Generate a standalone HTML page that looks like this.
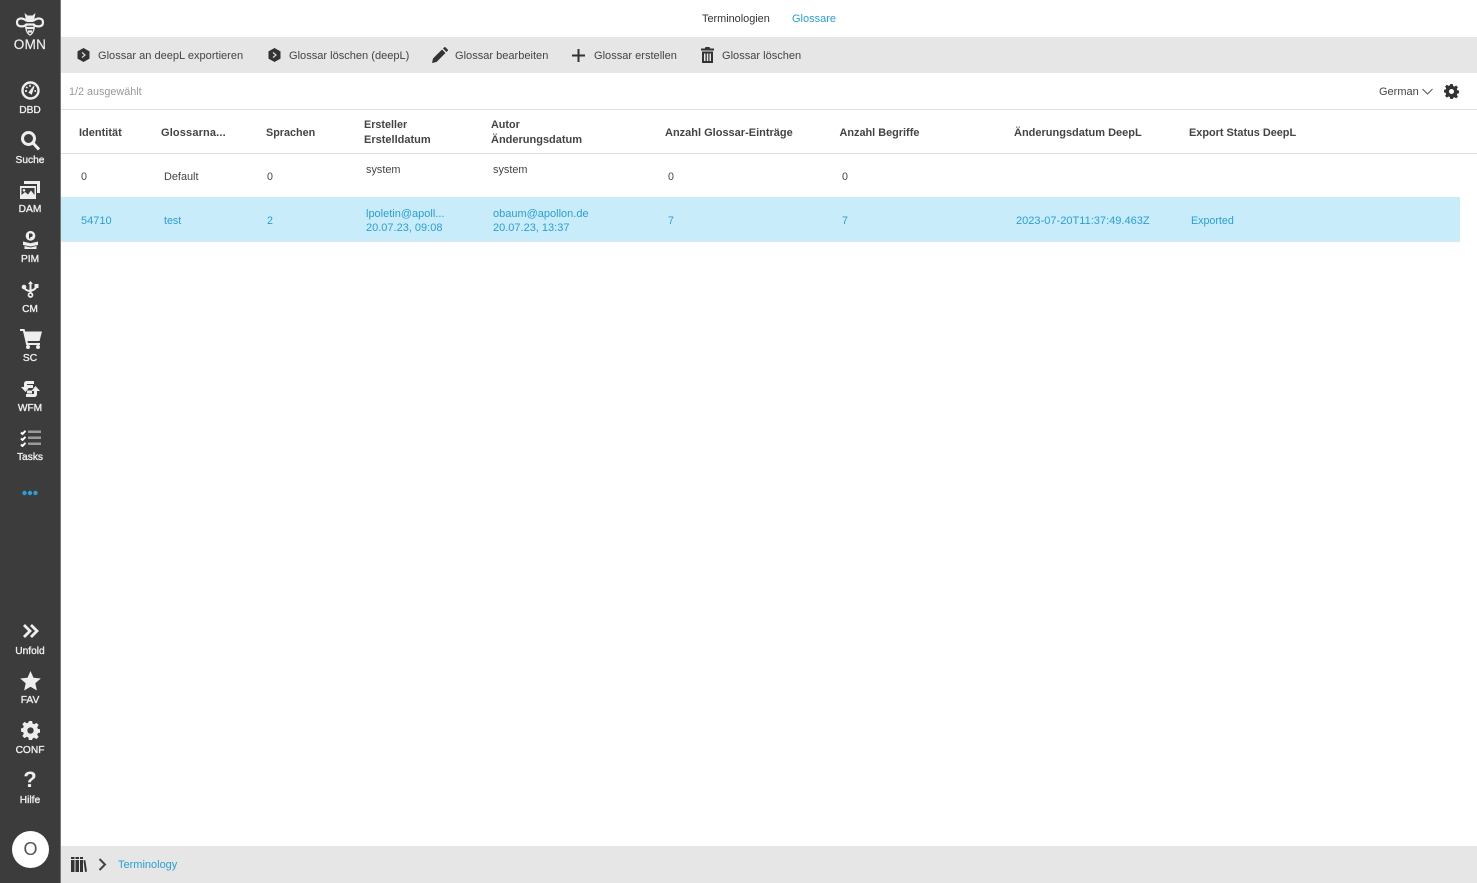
<!DOCTYPE html>
<html lang="de"><head><meta charset="utf-8"><title>Glossare</title>
<style>
html,body{margin:0;padding:0;width:1477px;height:883px;overflow:hidden;background:#fff;font-family:"Liberation Sans",sans-serif;font-size:12px;color:#444}
.a{position:absolute;white-space:nowrap;line-height:14px}
.b{font-weight:bold;color:#444}
.l{color:#2a9fd6}
.n{position:absolute;left:0;width:60px;text-align:center;color:#eee;font-size:10.2px;line-height:12px;-webkit-text-stroke:.35px #eee}
svg{position:absolute;display:block}
</style></head><body>
<div style="position:absolute;left:0;top:0;width:60px;height:883px;background:#3c3c3c"></div>
<div style="position:absolute;left:60px;top:0;width:1px;height:883px;background:#777"></div>
<div style="position:absolute;left:61px;top:37px;width:1416px;height:36px;background:#e6e6e6"></div>
<div style="position:absolute;left:61px;top:109px;width:1416px;height:1px;background:#e0e0e0"></div>
<div style="position:absolute;left:61px;top:153px;width:1416px;height:1px;background:#e0e0e0"></div>
<div style="position:absolute;left:61px;top:197px;width:1399px;height:45px;background:#c9ecfa;border-bottom:1px solid #dde8ee;box-sizing:border-box"></div>
<div style="position:absolute;left:61px;top:846px;width:1416px;height:37px;background:#e6e6e6"></div>

<!-- Sidebar -->
<svg style="left:14px;top:12px" width="32" height="26" viewBox="0 0 32 26" fill="none" stroke="#eee" stroke-width="2.200"><path d="M13 9C8 5 3 6 3 10.500s6 5 10 2M19 9c5-4 10-3 10 1.500s-6 5-10 2"/><path fill="#eee" stroke="none" d="M10.500 1l3 2.500h5L21.500 1l-1 5-1.500 4h-6l-1.500-4z"/><path d="M11.500 12.500h9M12 16h8M14 19.500h4" stroke-width="2.300"/><path d="M11.500 12c0 6 2 10 4.500 11 2.500-1 4.500-5 4.500-11" stroke-width="1.300"/></svg>
<div class="a" style="left:0;width:60px;text-align:center;top:38px;font-size:13.500px;color:#eee;letter-spacing:.3px;-webkit-text-stroke:.2px #eee">OMN</div>
<svg style="left:21px;top:81px" width="19" height="19" viewBox="0 0 19 19" fill="none" stroke="#eee"><circle cx="9.500" cy="9.500" r="8" stroke-width="2.400"/><path d="M8 11.500L13 5l-2.500 8z" fill="#eee"/><path d="M4 10h2M5.200 5.800l1.200 1.200M9 3.800v2M13.500 10h1.500" stroke-width="1.700"/></svg>
<div class="n" style="top:105px">DBD</div>
<svg style="left:20px;top:130px" width="21" height="21" viewBox="0 0 21 21" fill="none" stroke="#eee" stroke-width="3"><circle cx="8.500" cy="8.500" r="6"/><path d="M13 13l6 6.500"/></svg>
<div class="n" style="top:155px">Suche</div>
<svg style="left:20px;top:181px" width="20" height="18" viewBox="0 0 20 18" fill="#eee"><path d="M4 0h16v12h-3V3H4z"/><path fill-rule="evenodd" d="M0 5h16v13H0zM1.500 7v7l3.500-3 3 2.500 3-4 3.500 4.500V7zM4 8a1.300 1.300 0 1 0 .01 0z"/></svg>
<div class="n" style="top:204px">DAM</div>
<svg style="left:22px;top:231px" width="17" height="18" viewBox="0 0 17 18" fill="#eee"><path fill-rule="evenodd" d="M8.500 0a4.800 4.800 0 1 1-.01 0zM7 2.500v5h1.300V6h1a1.800 1.800 0 0 0 0-3.500z"/><path d="M1 10.500l7.500 1.700 7.500-1.700v3.500l-7.500 1.500L1 14zM2.500 15l6 1.500 6-1.500v3h-12z"/></svg>
<div class="n" style="top:254px">PIM</div>
<svg style="left:21px;top:281px" width="19" height="17" viewBox="0 0 19 17" fill="#eee" stroke="#eee"><path d="M9.500 2v10M3 6.500c1.500 2.500 3.500 3.500 6.500 3.500M15.500 5c-.5 3-3 4-6 5" fill="none" stroke-width="2"/><path d="M9.500 0l2.500 3H7z" stroke="none"/><circle cx="3" cy="6" r="2.300" stroke="none"/><rect x="13.500" y="3" width="4" height="4" stroke="none"/><circle cx="9.500" cy="14" r="2" fill="none" stroke-width="1.700"/></svg>
<div class="n" style="top:304px">CM</div>
<svg style="left:20px;top:329px" width="22" height="20" viewBox="0 0 22 20" fill="#eee"><path d="M0 0h4.500l.7 2.500H22L19.500 12H7.500l.4 2H20v2H6.200L3 2H0z"/><circle cx="8" cy="18" r="2"/><circle cx="18" cy="18" r="2"/></svg>
<div class="n" style="top:353px">SC</div>
<svg style="left:21px;top:381px" width="19" height="16" viewBox="0 0 19 16" fill="#eee"><path d="M3 3C3 1 4 0 6 0h7v3H6v3h2.500L4.500 11 0 6h3zM16 5v8c0 2-1 3-3 3H5v-3h8v-3h-2.500l4-5 4.500 5H16z"/><rect x="6" y="4" width="6" height="3"/><rect x="6" y="9.500" width="5" height="3"/></svg>
<div class="n" style="top:403px">WFM</div>
<svg style="left:20px;top:430px" width="21" height="17" viewBox="0 0 21 17"><path d="M1 2.500L2.500 4 5.500.8M1 8.500L2.500 10l3-3.200M1 14.500L2.500 16l3-3.200" fill="none" stroke="#fff" stroke-width="2"/><path d="M8 .5h13v2.500H8zM8 6.500h13V9H8zM8 12.500h13V15H8z" fill="#9a9a9a"/></svg>
<div class="n" style="top:452px">Tasks</div>
<svg style="left:22px;top:490px" width="16" height="6" viewBox="0 0 16 6" fill="#2a9fd6"><circle cx="2.500" cy="3" r="2.200"/><circle cx="8" cy="3" r="2.200"/><circle cx="13.500" cy="3" r="2.200"/></svg>

<svg style="left:22px;top:623px" width="17" height="16" viewBox="0 0 17 16" fill="none" stroke="#eee" stroke-width="2.800"><path d="M2 2l6 6-6 6M9 2l6 6-6 6"/></svg>
<div class="n" style="top:646px">Unfold</div>
<svg style="left:20px;top:671px" width="21" height="20" viewBox="0 0 21 20" fill="#eee"><path d="M10.500 0l3 6.700 7.300.8-5.500 4.800 1.600 7.200-6.400-3.700-6.400 3.700 1.600-7.200L.2 7.500l7.300-.8z"/></svg>
<div class="n" style="top:695px">FAV</div>
<svg style="left:21px;top:721px" width="19" height="19" viewBox="0 0 24 24" fill="#eee"><path fill-rule="evenodd" d="M10 0h4l.7 3.300 2 .8L19.500 2.300l2.800 2.800-1.800 2.800.8 2 3.300.7v4l-3.300.7-.8 2 1.800 2.800-2.800 2.800-2.800-1.800-2 .8L14 24h-4l-.7-3.300-2-.8-2.800 1.800-2.800-2.800 1.800-2.800-.8-2L0 13.400v-4l2.700-.7.8-2-1.800-2.800 2.800-2.800 2.800 1.800 2-.8zM12 8a4 4 0 1 0 .01 0z"/></svg>
<div class="n" style="top:745px">CONF</div>
<div class="a" style="left:0;width:60px;text-align:center;top:769px;font-size:22px;line-height:22px;color:#eee;font-weight:bold">?</div>
<div class="n" style="top:795px">Hilfe</div>
<div style="position:absolute;left:12px;top:831px;width:37px;height:37px;border-radius:50%;background:#fff;color:#555;font-size:18px;line-height:37px;text-align:center">O</div>

<!-- Top tabs -->
<div class="a" style="left:702px;top:12px;font-size:10.900px;color:#333">Terminologien</div>
<div class="a l" style="left:792px;top:12px;font-size:11px">Glossare</div>

<!-- Toolbar -->
<svg style="left:77px;top:48px" width="13" height="14" viewBox="0 0 13 14"><path d="M6.500 0l6 3.400v7.200l-6 3.400-6-3.400V3.400z" fill="#333"/><path d="M5 4.500L8 7 5 9.500" fill="none" stroke="#ddd" stroke-width="1.200"/></svg>
<div class="a" style="left:98px;top:49px;font-size:11.050px">Glossar an deepL exportieren</div>
<svg style="left:268px;top:48px" width="13" height="14" viewBox="0 0 13 14"><path d="M6.500 0l6 3.400v7.200l-6 3.400-6-3.400V3.400z" fill="#333"/><path d="M5 4.500L8 7 5 9.500" fill="none" stroke="#ddd" stroke-width="1.200"/></svg>
<div class="a" style="left:289px;top:49px;font-size:11.050px">Glossar löschen (deepL)</div>
<svg style="left:432px;top:47px" width="16" height="16" viewBox="0 0 16 16" fill="#333"><path d="M0 16l1-4.500L10 2.500l3.500 3.500-9 9zM11 1.500L12.300.2c.3-.3.8-.3 1.100 0l2.400 2.400c.3.300.3.800 0 1.100L14.500 5z"/></svg>
<div class="a" style="left:455px;top:49px;font-size:11.050px">Glossar bearbeiten</div>
<svg style="left:572px;top:49px" width="13" height="13" viewBox="0 0 13 13" fill="#333"><path d="M5.500 0h2v5.500H13v2H7.500V13h-2V7.500H0v-2h5.500z"/></svg>
<div class="a" style="left:594px;top:49px;font-size:11.050px">Glossar erstellen</div>
<svg style="left:701px;top:47px" width="13" height="16" viewBox="0 0 13 16" fill="#333"><path d="M4.500 0h4l.7 1.500H13v2H0v-2h3.800zM1 4.500h11V16H1zM3 6.500V14h1.500V6.500zM5.800 6.500V14h1.500V6.500zM8.500 6.500V14H10V6.500z" fill-rule="evenodd"/></svg>
<div class="a" style="left:722px;top:49px;font-size:11.050px">Glossar löschen</div>

<!-- Status row -->
<div class="a" style="left:69px;top:85px;font-size:10.800px;color:#999">1/2 ausgewählt</div>
<div class="a" style="left:1379px;top:85px;font-size:11px;color:#444">German</div>
<svg style="left:1422px;top:88px" width="11" height="7" viewBox="0 0 11 7" fill="none" stroke="#555"><path d="M.5 1l5 5 5-5"/></svg>
<svg style="left:1444px;top:84px" width="15" height="15" viewBox="0 0 24 24" fill="#333"><path fill-rule="evenodd" d="M10 0h4l.7 3.300 2 .8L19.500 2.300l2.800 2.800-1.800 2.800.8 2 3.300.7v4l-3.300.7-.8 2 1.800 2.800-2.800 2.800-2.800-1.800-2 .8L14 24h-4l-.7-3.300-2-.8-2.800 1.800-2.800-2.800 1.800-2.800-.8-2L0 13.400v-4l2.700-.7.8-2-1.800-2.800 2.800-2.800 2.800 1.800 2-.8zM12 8a4 4 0 1 0 .01 0z"/></svg>

<!-- Header -->
<div class="a b" style="left:79px;top:126px;font-size:11px">Identität</div>
<div class="a b" style="left:161px;top:126px;font-size:11px;letter-spacing:.15px">Glossarna...</div>
<div class="a b" style="left:266px;top:126px;font-size:10.800px">Sprachen</div>
<div class="a b" style="left:364px;top:118px;font-size:10.800px">Ersteller</div>
<div class="a b" style="left:364px;top:133px;font-size:11px">Erstelldatum</div>
<div class="a b" style="left:491px;top:118px;font-size:10.800px">Autor</div>
<div class="a b" style="left:491px;top:133px;font-size:11px">Änderungsdatum</div>
<div class="a b" style="left:665px;top:126px;font-size:11px">Anzahl Glossar-Einträge</div>
<div class="a b" style="left:839.500px;top:126px;font-size:10.900px">Anzahl Begriffe</div>
<div class="a b" style="left:1014px;top:126px;font-size:11px">Änderungsdatum DeepL</div>
<div class="a b" style="left:1189px;top:126px;font-size:10.900px">Export Status DeepL</div>

<!-- Row 1 -->
<div class="a" style="left:81px;top:170px;font-size:10.700px">0</div>
<div class="a" style="left:164px;top:170px;font-size:10.900px">Default</div>
<div class="a" style="left:267px;top:170px;font-size:10.700px">0</div>
<div class="a" style="left:366px;top:163px;font-size:10.900px">system</div>
<div class="a" style="left:493px;top:163px;font-size:10.900px">system</div>
<div class="a" style="left:668px;top:170px;font-size:10.700px">0</div>
<div class="a" style="left:842px;top:170px;font-size:10.700px">0</div>

<!-- Row 2 -->
<div class="a l" style="left:81px;top:214px;font-size:11px">54710</div>
<div class="a l" style="left:164px;top:214px;font-size:10.700px">test</div>
<div class="a l" style="left:267px;top:214px;font-size:10.700px">2</div>
<div class="a l" style="left:366px;top:207px;font-size:11px">lpoletin@apoll...</div>
<div class="a l" style="left:366px;top:221px;font-size:11px">20.07.23, 09:08</div>
<div class="a l" style="left:493px;top:207px;font-size:11px">obaum@apollon.de</div>
<div class="a l" style="left:493px;top:221px;font-size:11px">20.07.23, 13:37</div>
<div class="a l" style="left:668px;top:214px;font-size:10.700px">7</div>
<div class="a l" style="left:842px;top:214px;font-size:10.700px">7</div>
<div class="a l" style="left:1016px;top:214px;font-size:11.050px">2023-07-20T11:37:49.463Z</div>
<div class="a l" style="left:1191px;top:214px;font-size:10.700px">Exported</div>

<!-- Footer -->
<svg style="left:71px;top:857px" width="16" height="15" viewBox="0 0 16 15" fill="#333"><path d="M0 3h3.500v12H0zM4.500 3H8v12H4.500zM9 3h3v12H9zM12.500 3.500l1.800-.5 1.700 11.500-2 .5z"/><path d="M0 0h3.500v2H0zM4.500 0H8v2H4.500zM9 0h3v2H9z"/></svg>
<svg style="left:98px;top:858px" width="9" height="13" viewBox="0 0 9 13" fill="none" stroke="#444" stroke-width="2"><path d="M1.500 1l5.500 5.500L1.500 12"/></svg>
<div class="a l" style="left:118px;top:858px;font-size:11px">Terminology</div>
</body></html>
